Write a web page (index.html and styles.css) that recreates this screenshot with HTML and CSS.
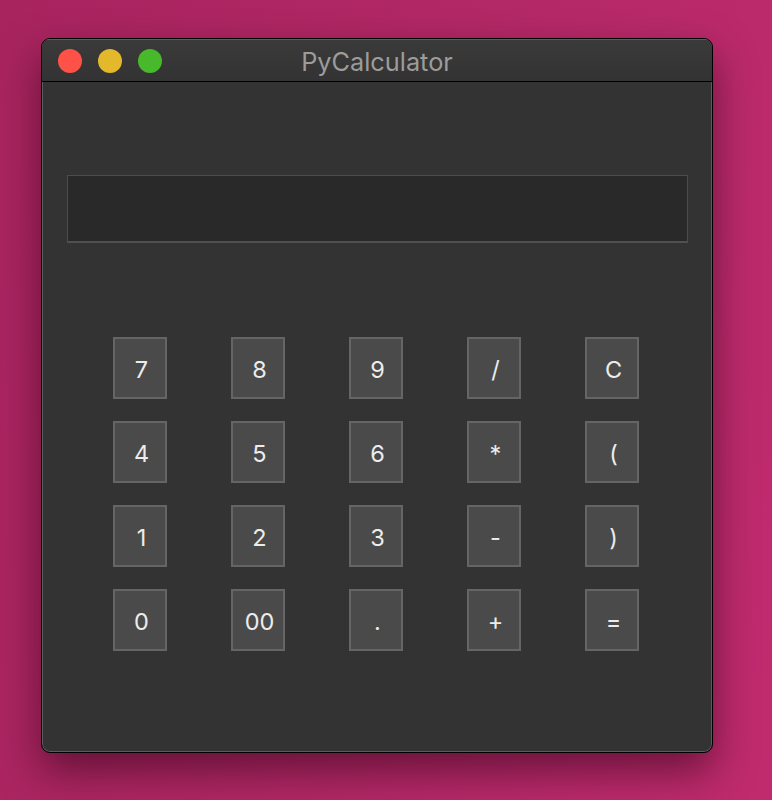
FILE: index.html
```html
<!DOCTYPE html>
<html>
<head>
<meta charset="utf-8">
<link rel="stylesheet" href="styles.css">
</head>
<body>
<div class="desktop">
  <div class="window">
    <div class="titlebar">
      <div class="lights">
        <span class="light red"></span>
        <span class="light yellow"></span>
        <span class="light green"></span>
      </div>
      <div class="title">PyCalculator</div>
    </div>
    <div class="content">
      <div class="display"></div>
      <div class="keys">
        <div class="key">7</div><div class="key">8</div><div class="key">9</div><div class="key">/</div><div class="key">C</div>
        <div class="key">4</div><div class="key">5</div><div class="key">6</div><div class="key">*</div><div class="key">(</div>
        <div class="key">1</div><div class="key">2</div><div class="key">3</div><div class="key">-</div><div class="key">)</div>
        <div class="key">0</div><div class="key">00</div><div class="key">.</div><div class="key">+</div><div class="key">=</div>
      </div>
    </div>
  </div>
</div>
</body>
</html>
```
FILE: styles.css
```css
* { box-sizing: border-box; }
html, body { margin: 0; padding: 0; }
body {
  width: 772px;
  height: 800px;
  overflow: hidden;
  background: linear-gradient(100deg, #a8245f 0%, #b22866 50%, #c02b6e 100%);
  font-family: Inter, "Liberation Sans", sans-serif;
}
.desktop {
  padding: 38px 0 0 41px;
}
.window {
  width: 672px;
  height: 715px;
  border: 1px solid #000;
  border-radius: 9px;
  background: #333333;
  box-shadow: inset 0 0 0 1px #5c5c5c, 0 18px 40px rgba(40, 0, 20, 0.55);
  overflow: hidden;
  display: flex;
  flex-direction: column;
}
.titlebar {
  height: 43px;
  border-bottom: 1px solid #000;
  background: linear-gradient(#3a3a3a, #333333);
  border-top: 1px solid #5c5c5c;
  display: flex;
  align-items: center;
  position: relative;
  flex-shrink: 0;
}
.lights {
  display: flex;
  gap: 16px;
  padding-left: 16px;
}
.light {
  width: 24px;
  height: 24px;
  border-radius: 50%;
  display: block;
}
.red { background: #fe5147; }
.yellow { background: #e3b82b; }
.green { background: #47b92b; }
.title {
  position: absolute;
  left: 0;
  right: 0;
  top: 0;
  bottom: 0;
  display: flex;
  align-items: center;
  justify-content: center;
  color: #9c9c9c;
  font-size: 25.3px;
  padding-top: 1px;
}
.content {
  flex: 1;
  padding: 93px 24px 0 25px;
}
.display {
  height: 68px;
  width: 621px;
  background: #292929;
  border: 1px solid #4c4c4c;
  border-bottom: 2px solid #505050;
}
.keys {
  margin-top: 94px;
  padding-left: 46px;
  display: grid;
  grid-template-columns: repeat(5, 54px);
  grid-auto-rows: 62px;
  column-gap: 64px;
  row-gap: 22px;
}
.key {
  background: #4a4a4a;
  border: 2px solid #656565;
  color: #ececec;
  font-size: 23.5px;
  padding: 2px 0 0 3px;
  display: flex;
  align-items: center;
  justify-content: center;
}
```
